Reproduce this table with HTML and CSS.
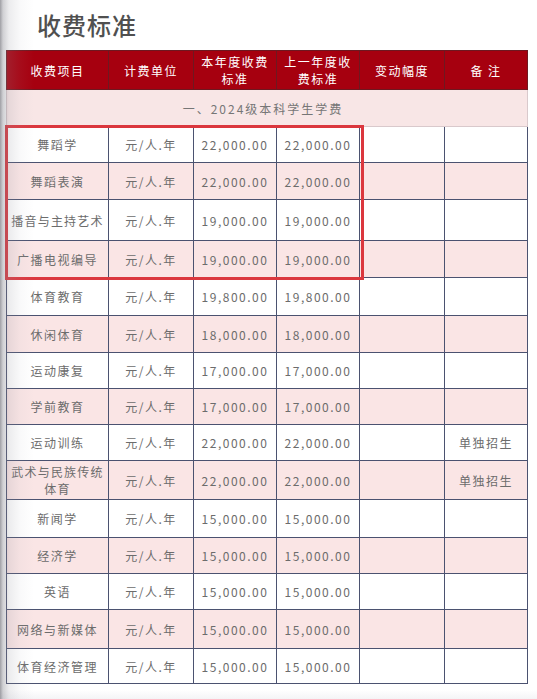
FILE: index.html
```html
<!DOCTYPE html>
<html lang="zh">
<head>
<meta charset="utf-8">
<title>收费标准</title>
<link rel="stylesheet" href="styles.css">
</head>
<body>
<div class="page">
  <h1 class="title">收费标准</h1>
  <table class="fees">
    <colgroup>
      <col class="c1"><col class="c2"><col class="c3"><col class="c4"><col class="c5"><col class="c6">
    </colgroup>
    <thead>
      <tr class="head">
        <th>收费项目</th>
        <th>计费单位</th>
        <th class="two">本年度收费<br>标准</th>
        <th class="two">上一年度收<br>费标准</th>
        <th>变动幅度</th>
        <th>备 注</th>
      </tr>
    </thead>
    <tbody>
      <tr class="group"><td colspan="6">一、2024级本科学生学费</td></tr>
      <tr class="r36"><td>舞蹈学</td><td>元/人.年</td><td>22,000.00</td><td>22,000.00</td><td></td><td></td></tr>
      <tr class="pink r37"><td>舞蹈表演</td><td>元/人.年</td><td>22,000.00</td><td>22,000.00</td><td></td><td></td></tr>
      <tr class="r41"><td class="tight">播音与主持艺术</td><td>元/人.年</td><td>19,000.00</td><td>19,000.00</td><td></td><td></td></tr>
      <tr class="pink r37"><td>广播电视编导</td><td>元/人.年</td><td>19,000.00</td><td>19,000.00</td><td></td><td></td></tr>
      <tr class="r38"><td>体育教育</td><td>元/人.年</td><td>19,800.00</td><td>19,800.00</td><td></td><td></td></tr>
      <tr class="pink r37"><td>休闲体育</td><td>元/人.年</td><td>18,000.00</td><td>18,000.00</td><td></td><td></td></tr>
      <tr class="r36"><td>运动康复</td><td>元/人.年</td><td>17,000.00</td><td>17,000.00</td><td></td><td></td></tr>
      <tr class="pink r36"><td>学前教育</td><td>元/人.年</td><td>17,000.00</td><td>17,000.00</td><td></td><td></td></tr>
      <tr class="r36"><td>运动训练</td><td>元/人.年</td><td>22,000.00</td><td>22,000.00</td><td></td><td>单独招生</td></tr>
      <tr class="pink r39"><td class="tight two">武术与民族传统<br>体育</td><td>元/人.年</td><td>22,000.00</td><td>22,000.00</td><td></td><td>单独招生</td></tr>
      <tr class="r38"><td>新闻学</td><td>元/人.年</td><td>15,000.00</td><td>15,000.00</td><td></td><td></td></tr>
      <tr class="pink r36"><td>经济学</td><td>元/人.年</td><td>15,000.00</td><td>15,000.00</td><td></td><td></td></tr>
      <tr class="r36"><td>英语</td><td>元/人.年</td><td>15,000.00</td><td>15,000.00</td><td></td><td></td></tr>
      <tr class="pink r39"><td>网络与新媒体</td><td>元/人.年</td><td>15,000.00</td><td>15,000.00</td><td></td><td></td></tr>
      <tr class="r35"><td>体育经济管理</td><td>元/人.年</td><td>15,000.00</td><td>15,000.00</td><td></td><td></td></tr>
    </tbody>
  </table>
  <div class="highlight"></div>
  <div class="gutter"></div>
</div>
</body>
</html>
```
FILE: styles.css
```css
html, body {
  margin: 0;
  padding: 0;
  background: #ffffff;
}

.page {
  position: relative;
  width: 537px;
  height: 699px;
  overflow: hidden;
  font-family: "Noto Sans CJK SC", "Noto Sans", "DejaVu Sans", sans-serif;
  background: linear-gradient(to bottom, #ffffff 0, #ffffff 690px, #f4f4f6 699px);
}

.title {
  margin: 0;
  height: 50px;
  padding-left: 37px;
  box-sizing: border-box;
  padding-top: 8px;
  font-size: 24px;
  line-height: 34px;
  font-weight: 500;
  color: #505050;
  letter-spacing: 1px;
}

.fees {
  margin-left: 6px;
  width: 521px;
  border-collapse: collapse;
  table-layout: fixed;
  font-size: 12px;
  letter-spacing: 1.5px;
  color: #6c6c6c;
}

.c1 { width: 102px; }
.c2 { width: 85px; }
.c3 { width: 83px; }
.c4 { width: 83px; }
.c5 { width: 85px; }
.c6 { width: 83px; }

.fees tr.head { height: 39px; }

.fees th {
  padding: 0;
  background: #a6000f;
  color: #ffffff;
  font-weight: 400;
  font-size: 12px;
  line-height: 17px;
  border: 1px solid #6e1820;
  text-align: center;
  vertical-align: middle;
}

.fees td {
  padding: 0;
  text-align: center;
  vertical-align: middle;
  border: 1px solid #4b5270;
  line-height: 17px;
  white-space: nowrap;
  background: #ffffff;
}

.fees tr.pink td {
  background: #fae5e5;
}

.fees tr.group { height: 37px; }

.fees tr.group td {
  background: #f8e6e6;
  color: #767676;
  letter-spacing: 2px;
  border-color: #d9c9cc;
  padding-right: 8px;
}

.fees tr.r35 { height: 35px; }
.fees tr.r36 { height: 36px; }
.fees tr.r37 { height: 37px; }
.fees tr.r38 { height: 38px; }
.fees tr.r39 { height: 39px; }
.fees tr.r41 { height: 41px; }

.fees td.tight {
  letter-spacing: 1.2px;
}

.fees td.two,
.fees th.two {
  line-height: 17px;
}

.highlight {
  position: absolute;
  left: 5px;
  top: 125px;
  width: 359px;
  height: 155px;
  box-sizing: border-box;
  border: 3px solid #db373e;
  pointer-events: none;
}

.gutter {
  position: absolute;
  left: 0;
  top: 0;
  width: 34px;
  height: 699px;
  pointer-events: none;
  background: linear-gradient(to right,
    rgba(80, 80, 90, 0.55) 0,
    rgba(120, 120, 130, 0.35) 3px,
    rgba(150, 150, 160, 0.18) 9px,
    rgba(170, 170, 180, 0.07) 20px,
    rgba(255, 255, 255, 0) 34px);
}
```
